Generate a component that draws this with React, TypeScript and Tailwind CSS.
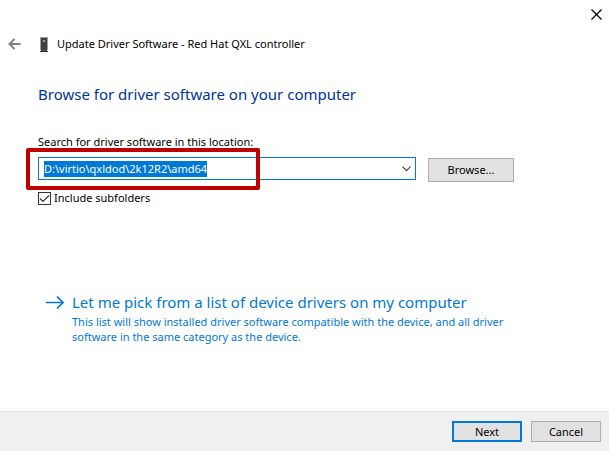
import { useEffect, useRef, useState } from "react"

const CloseIcon = () => (
  <svg width="11" height="11" viewBox="0 0 11 11" fill="none" stroke="#000" strokeWidth="1.2">
    <path d="M0.5 0.5L10.5 10.5M10.5 0.5L0.5 10.5" />
  </svg>
)

const BackIcon = () => (
  <svg width="13" height="12" viewBox="0 0 13 12" fill="none" stroke="#808080" strokeWidth="2">
    <path d="M12.5 6H1.5M6.5 1L1.5 6L6.5 11" />
  </svg>
)

const DeviceIcon = () => (
  <svg width="8" height="15" viewBox="0 0 8 15" shapeRendering="crispEdges">
    <rect x="0" y="0" width="8" height="13" fill="#a0a0a0" />
    <rect x="1" y="1" width="6" height="12" fill="#404040" />
    <rect x="3" y="3" width="2" height="2" fill="#2bf02b" />
    <rect x="1" y="13" width="6" height="1" fill="#555" />
    <rect x="0" y="14" width="8" height="1" fill="#2e2e2e" />
  </svg>
)

const ArrowIcon = () => (
  <svg width="18" height="13" viewBox="0 0 18 13" fill="none" stroke="#0078d7" strokeWidth="1.6">
    <path d="M0 6.5H17M11 0.7L17 6.5L11 12.3" />
  </svg>
)

const ChevronIcon = () => (
  <svg width="9" height="6" viewBox="0 0 9 6" fill="none" stroke="#444" strokeWidth="1.2">
    <path d="M0.5 0.7L4.5 4.7L8.5 0.7" />
  </svg>
)

const TitleBar = () => {
  return (
    <header>
      <div className="flex h-7 items-center justify-end pr-[7px]">
        <button type="button" aria-label="Close">
          <CloseIcon />
        </button>
      </div>
      <div className="flex h-8 items-center pl-2">
        <button type="button" aria-label="Back">
          <BackIcon />
        </button>
        <span className="ml-[19px]">
          <DeviceIcon />
        </span>
        <span className="ml-[9px] whitespace-nowrap text-black">
          Update Driver Software - Red Hat QXL controller
        </span>
      </div>
    </header>
  )
}

const LocationField = () => {
  const [path, setPath] = useState("D:\\virtio\\qxldod\\2k12R2\\amd64")
  const input = useRef<HTMLInputElement>(null)

  useEffect(() => {
    input.current?.focus()
    input.current?.select()
  }, [])

  return (
    <div className="relative flex gap-3">
      <div className="flex h-[23px] flex-1 items-center border border-[#0078d7] bg-white pl-[5px]">
        <input
          id="location"
          ref={input}
          value={path}
          onChange={(e) => setPath(e.target.value)}
          className="h-4 min-w-0 flex-1 leading-4 outline-none selection:bg-[#0078d7] selection:text-white"
        />
        <button type="button" aria-label="Show locations" className="px-1">
          <ChevronIcon />
        </button>
      </div>
      <button
        type="button"
        className="mt-px h-6 w-[86px] border border-[#adadad] bg-[#e1e1e1] text-black"
      >
        Browse...
      </button>
      <div className="pointer-events-none absolute -top-[9px] -left-3 h-[42px] w-[234px] rounded-xs border-4 border-[#c00000]" />
    </div>
  )
}

const App = () => {
  const [subfolders, setSubfolders] = useState(true)

  return (
    <div className="flex min-h-screen flex-col bg-white font-['Noto_Sans','Open_Sans',sans-serif] text-[11px] text-black">
      <TitleBar />

      <main className="flex-1 pr-[95px] pl-[38px]">
        <h1 className="mt-[22px] text-[15px] leading-6 whitespace-nowrap text-[#003399]">
          Browse for driver software on your computer
        </h1>

        <label htmlFor="location" className="mt-7 mb-[7px] block leading-4">
          Search for driver software in this location:
        </label>
        <LocationField />

        <label className="mt-2 flex items-center gap-[3px] leading-4">
          <span className="relative flex size-[13px]">
            <input
              type="checkbox"
              checked={subfolders}
              onChange={(e) => setSubfolders(e.target.checked)}
              className="peer size-[13px] appearance-none border border-[#333] bg-white"
            />
            <svg
              viewBox="0 0 13 13"
              fill="none"
              stroke="#333"
              strokeWidth="1.2"
              className="pointer-events-none absolute inset-0 hidden peer-checked:block"
            >
              <path d="M2 6.5L5 9.5L11 3.5" />
            </svg>
          </span>
          Include subfolders
        </label>

        <a href="#pick" className="mt-[84px] ml-2 flex gap-2 text-[#0078d7]">
          <span className="mt-[6px] shrink-0">
            <ArrowIcon />
          </span>
          <span>
            <span className="block text-[15px] leading-6 whitespace-nowrap">
              Let me pick from a list of device drivers on my computer
            </span>
            <span className="block leading-[15px]">
              This list will show installed driver software compatible with the device, and all driver
              software in the same category as the device.
            </span>
          </span>
        </a>
      </main>

      <footer className="flex justify-end gap-[9px] border-t border-[#dfdfdf] bg-[#f0f0f0] py-[9px] pr-2">
        <button type="button" className="h-[21px] w-[70px] border-2 border-[#0078d7] bg-[#e1e1e1] leading-4">
          Next
        </button>
        <button type="button" className="h-[21px] w-[70px] border border-[#adadad] bg-[#e1e1e1] leading-4">
          Cancel
        </button>
      </footer>
    </div>
  )
}

export default App
